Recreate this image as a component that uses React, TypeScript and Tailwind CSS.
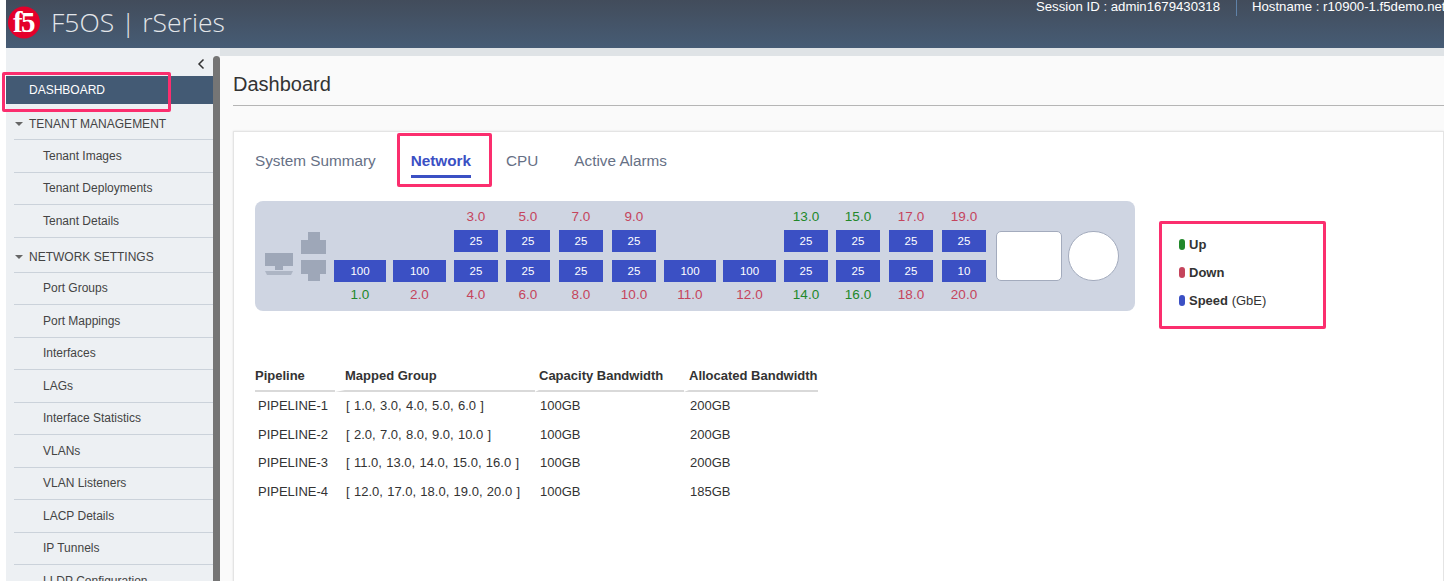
const menu = [
    { name: 'TENANT MANAGEMENT', headerClass: 'h-[35px] pt-[5px]', items: ['Tenant Images', 'Tenant Deployments', 'Tenant Details'] },
    {
        name: 'NETWORK SETTINGS',
        headerClass: 'h-[32px] pt-[3px]',
        items: ['Port Groups', 'Port Mappings', 'Interfaces', 'LAGs', 'Interface Statistics', 'VLANs', 'VLAN Listeners', 'LACP Details', 'IP Tunnels', 'LLDP Configuration'],
    },
];

type Label = { text: string; up: boolean };
type Port = { width: string; gap: string; top?: Label; topSpeed?: string; speed: string; bottom: Label };

const ports: Port[] = [
    { width: 'w-[52px]', gap: '', speed: '100', bottom: { text: '1.0', up: true } },
    { width: 'w-[53px]', gap: 'ml-[7px]', speed: '100', bottom: { text: '2.0', up: false } },
    { width: 'w-[44px]', gap: 'ml-[8px]', top: { text: '3.0', up: false }, topSpeed: '25', speed: '25', bottom: { text: '4.0', up: false } },
    { width: 'w-[44px]', gap: 'ml-[8px]', top: { text: '5.0', up: false }, topSpeed: '25', speed: '25', bottom: { text: '6.0', up: false } },
    { width: 'w-[44px]', gap: 'ml-[9px]', top: { text: '7.0', up: false }, topSpeed: '25', speed: '25', bottom: { text: '8.0', up: false } },
    { width: 'w-[44px]', gap: 'ml-[9px]', top: { text: '9.0', up: false }, topSpeed: '25', speed: '25', bottom: { text: '10.0', up: false } },
    { width: 'w-[52px]', gap: 'ml-[8px]', speed: '100', bottom: { text: '11.0', up: false } },
    { width: 'w-[53px]', gap: 'ml-[7px]', speed: '100', bottom: { text: '12.0', up: false } },
    { width: 'w-[44px]', gap: 'ml-[8px]', top: { text: '13.0', up: true }, topSpeed: '25', speed: '25', bottom: { text: '14.0', up: true } },
    { width: 'w-[44px]', gap: 'ml-[8px]', top: { text: '15.0', up: true }, topSpeed: '25', speed: '25', bottom: { text: '16.0', up: true } },
    { width: 'w-[44px]', gap: 'ml-[9px]', top: { text: '17.0', up: false }, topSpeed: '25', speed: '25', bottom: { text: '18.0', up: false } },
    { width: 'w-[44px]', gap: 'ml-[9px]', top: { text: '19.0', up: false }, topSpeed: '25', speed: '10', bottom: { text: '20.0', up: false } },
];

const pipelines = [
    ['PIPELINE-1', '[ 1.0, 3.0, 4.0, 5.0, 6.0 ]', '100GB', '200GB'],
    ['PIPELINE-2', '[ 2.0, 7.0, 8.0, 9.0, 10.0 ]', '100GB', '200GB'],
    ['PIPELINE-3', '[ 11.0, 13.0, 14.0, 15.0, 16.0 ]', '100GB', '200GB'],
    ['PIPELINE-4', '[ 12.0, 17.0, 18.0, 19.0, 20.0 ]', '100GB', '185GB'],
];

function PortLabel({ label, className }: { label?: Label; className: string }) {
    return (
        <div className={`h-[20px] text-[13.5px] text-center ${className} ${label?.up ? 'text-[#22882a]' : 'text-[#c5445c]'}`}>
            {label?.text}
        </div>
    );
}

function SpeedBox({ speed }: { speed?: string }) {
    if (!speed) return <div className="h-[22px]" />;
    return <div className="h-[22px] bg-[#3b50c4] text-white text-[11.5px] leading-[22px] text-center font-medium">{speed}</div>;
}

function Dot({ color }: { color: string }) {
    return <span className={`w-[6px] h-[11px] rounded-full ${color}`} />;
}

export default function App() {
    return (
        <div className="h-[581px] w-[1444px] overflow-hidden bg-white pl-[6px] font-['Liberation_Sans',Arial,sans-serif] text-[#333]">
            {/* Header */}
            <header className="h-[48px] flex items-start bg-gradient-to-b from-[#424c5b] to-[#465c75] text-white">
                <div className="flex items-center h-[38px] mt-[3px] ml-[2px]">
                    <svg width="32" height="33" viewBox="0 0 32 33">
                        <circle cx="16" cy="16.5" r="16" fill="#e4002b" />
                        <text x="15.5" y="26" textAnchor="middle" fontFamily="'Liberation Serif',serif" fontWeight="700" fontSize="29" letterSpacing="-1.5" fill="#fff">f5</text>
                    </svg>
                    <span className="ml-[11px] pt-[2px] text-[26.5px] font-light text-[#e3e6ea] font-['Open_Sans',sans-serif]">F5OS | rSeries</span>
                </div>
                <div className="ml-auto flex items-start text-[13.2px] leading-[14px] whitespace-nowrap">
                    <span className="pr-[16px] border-r border-[#5f82a8] h-[16px]">Session ID : admin1679430318</span>
                    <span className="pl-[15px] w-[207px] overflow-hidden">Hostname : r10900-1.f5demo.net</span>
                </div>
            </header>

            <div className="flex h-[533px]">
                {/* Sidebar */}
                <aside className="w-[207px] shrink-0 bg-[#edf0f3] overflow-hidden">
                    <div className="h-[28px] flex items-center justify-end pr-[8px] pt-[4px]">
                        <svg width="8" height="12" viewBox="0 0 8 12" fill="none" stroke="#333" strokeWidth="1.5">
                            <path d="M6.5 1.5 L2 6 L6.5 10.5" />
                        </svg>
                    </div>
                    <div className="h-[28px] bg-[#435a74] text-white text-[12px] leading-[28px] pl-[23px] font-medium">DASHBOARD</div>
                    {menu.map((group) => (
                        <div key={group.name} className="mb-[2px]">
                            <div className={`flex items-center pl-[9px] text-[12px] text-[#444] ${group.headerClass}`}>
                                <span className="w-0 h-0 border-x-[4px] border-x-transparent border-t-[4px] border-t-[#666] mr-[6px]" />
                                {group.name}
                            </div>
                            <div className="ml-[8px] border-t border-[#cbd2da]">
                                {group.items.map((item) => (
                                    <div key={item} className="h-[32.5px] pl-[29px] flex items-center text-[12px] text-[#444] border-b border-[#cbd2da]">
                                        {item}
                                    </div>
                                ))}
                            </div>
                        </div>
                    ))}
                </aside>

                {/* Scrollbar */}
                <div className="w-[7px] shrink-0 bg-[#edf0f3]">
                    <div className="h-full mt-[8px] bg-[#757575] rounded-t-[4px]" />
                </div>

                {/* Main */}
                <main className="flex-1 min-w-0 bg-[#fafafa] border-t-[8px] border-[#dfe3e6] pl-[13px] overflow-hidden">
                    <h1 className="h-[50px] pt-[6px] flex items-center text-[20px] text-[#333] border-b border-[#b5b5b5]">Dashboard</h1>
                    <section className="mt-[25px] h-[500px] bg-white border border-[#e4e4e4] pl-[21px] shadow-[0_0_2px_rgba(0,0,0,0.1)]">
                        {/* Tabs */}
                        <div className="flex h-[44px] text-[15.3px] text-[#667085] gap-[35px] pt-[6px]">
                            <span className="h-[38px] pt-[14px] leading-[18px]">System Summary</span>
                            <span className="h-[38px] pt-[14px] leading-[18px] relative font-bold text-[#3b50c4]">
                                Network
                                <span className="absolute left-0 right-0 bottom-[-2px] h-[3px] bg-[#3b50c4]" />
                            </span>
                            <span className="h-[38px] pt-[14px] leading-[18px]">CPU</span>
                            <span className="h-[38px] pt-[14px] leading-[18px] ml-[1px]">Active Alarms</span>
                        </div>

                        <div className="flex items-start mt-[25px]">
                            {/* Chassis */}
                            <div className="w-[880px] h-[110px] bg-[#cfd5e2] rounded-[8px] flex items-center pl-[10px] shrink-0">
                                <svg width="65" height="51" viewBox="0 0 65 51" className="shrink-0" fill="#9ea7b8">
                                    <path d="M0 22h28v13h-10v4h-8v-4h-10z" />
                                    <path d="M0 40h28l-2 4h-24z" opacity="0.7" />
                                    <path d="M43 1h12v8h6v14h-25v-14h7z" />
                                    <path d="M36 29h25v14h-6v7h-12v-7h-7z" />
                                </svg>
                                <div className="flex ml-[4px]">
                                    {ports.map((port) => (
                                        <div key={port.bottom.text} className={`${port.width} ${port.gap}`}>
                                            <PortLabel label={port.top} className="leading-[14px]" />
                                            <SpeedBox speed={port.topSpeed} />
                                            <div className="h-[8px]" />
                                            <SpeedBox speed={port.speed} />
                                            <PortLabel label={port.bottom} className="leading-[26px]" />
                                        </div>
                                    ))}
                                </div>
                                <div className="w-[66px] h-[50px] ml-[10px] shrink-0 bg-white border border-[#a3abbd] rounded-[5px]" />
                                <div className="w-[51px] h-[50px] ml-[6px] shrink-0 bg-white border border-[#a3abbd] rounded-full" />
                            </div>

                            {/* Legend */}
                            <div className="ml-[44px] mt-[36px] flex flex-col gap-[13px] text-[13px] leading-[15px]">
                                <div className="flex items-center gap-[4px]"><Dot color="bg-[#22882a]" /><b>Up</b></div>
                                <div className="flex items-center gap-[4px]"><Dot color="bg-[#c5445c]" /><b>Down</b></div>
                                <div className="flex items-center gap-[4px]"><Dot color="bg-[#3b50c4]" /><span><b>Speed</b> (GbE)</span></div>
                            </div>
                        </div>

                        {/* Pipelines */}
                        <table className="mt-[51px] table-fixed w-[563px] border-separate border-spacing-0 text-[13px] text-[#333]">
                            <thead>
                                <tr className="text-left font-bold">
                                    <th className="w-[80px] h-[30px] border-b-2 border-[#d9d9d9]">Pipeline</th>
                                    <th className="w-[200px] border-b-2 border-[#d9d9d9] border-l-[10px] border-l-white">Mapped Group</th>
                                    <th className="w-[149px] border-b-2 border-[#d9d9d9] border-l-[4px] border-l-white">Capacity Bandwidth</th>
                                    <th className="w-[134px] border-b-2 border-[#d9d9d9] border-l-[5px] border-l-white whitespace-nowrap">Allocated Bandwidth</th>
                                </tr>
                            </thead>
                            <tbody>
                                {pipelines.map((row) => (
                                    <tr key={row[0]} className="h-[28.4px]">
                                        <td className="pl-[3px]">{row[0]}</td>
                                        <td className="pl-[11px] [word-spacing:0.7px] whitespace-nowrap">{row[1]}</td>
                                        <td className="pl-[5px]">{row[2]}</td>
                                        <td className="pl-[6px]">{row[3]}</td>
                                    </tr>
                                ))}
                            </tbody>
                        </table>
                    </section>
                </main>
            </div>

            {/* Annotation boxes drawn over the screenshot */}
            <div className="absolute left-[2px] top-[72px] w-[169px] h-[40px] border-[3px] border-[#fb2e6e] rounded-[2px]" />
            <div className="absolute left-[397px] top-[133px] w-[95px] h-[54px] border-[3px] border-[#fb2e6e] rounded-[2px]" />
            <div className="absolute left-[1159px] top-[221px] w-[167px] h-[108px] border-[3px] border-[#fb2e6e] rounded-[2px]" />
        </div>
    );
}
